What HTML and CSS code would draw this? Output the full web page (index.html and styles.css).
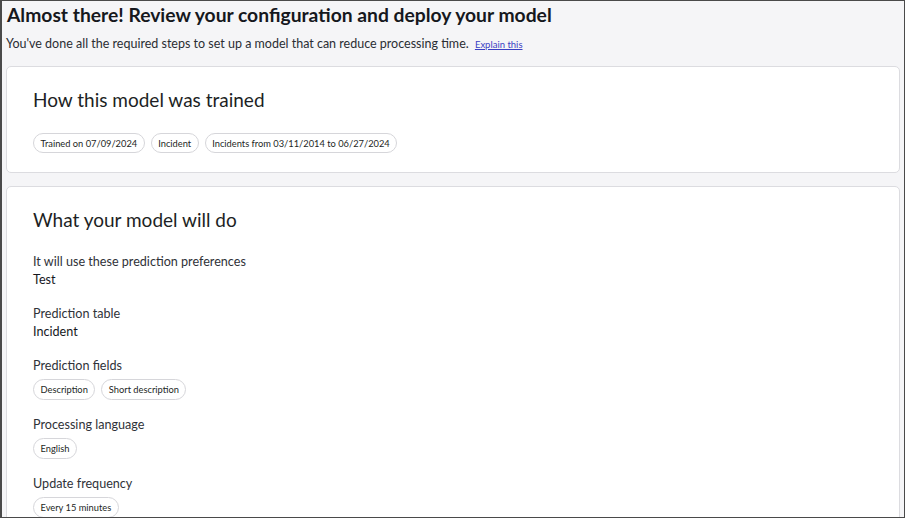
FILE: index.html
```html
<!DOCTYPE html>
<html>
<head>
<meta charset="utf-8">
<link rel="stylesheet" href="styles.css">
</head>
<body>
<div class="frame">
  <h1 class="title">Almost there! Review your configuration and deploy your model</h1>
  <p class="subtitle">You've done all the required steps to set up a model that can reduce processing time. <a class="link" href="#">Explain this</a></p>
  <section class="card card-trained">
    <h2 class="card-title">How this model was trained</h2>
    <div class="pills">
      <span class="pill">Trained on 07/09/2024</span>
      <span class="pill">Incident</span>
      <span class="pill">Incidents from 03/11/2014 to 06/27/2024</span>
    </div>
  </section>
  <section class="card card-do">
    <h2 class="card-title">What your model will do</h2>
    <div class="field">
      <div class="label">It will use these prediction preferences</div>
      <div class="value">Test</div>
    </div>
    <div class="field">
      <div class="label">Prediction table</div>
      <div class="value">Incident</div>
    </div>
    <div class="field">
      <div class="label">Prediction fields</div>
      <div class="pills small">
        <span class="pill">Description</span>
        <span class="pill">Short description</span>
      </div>
    </div>
    <div class="field">
      <div class="label">Processing language</div>
      <div class="pills small">
        <span class="pill">English</span>
      </div>
    </div>
    <div class="field">
      <div class="label">Update frequency</div>
      <div class="pills small">
        <span class="pill">Every 15 minutes</span>
      </div>
    </div>
  </section>
</div>
</body>
</html>
```
FILE: styles.css
```css
html, body {
  margin: 0;
  padding: 0;
  background: #ffffff;
  overflow: hidden;
}
body {
  font-family: Lato, "Open Sans", sans-serif;
  color: #1d1f24;
}
.frame {
  box-sizing: border-box;
  width: 905px;
  height: 518px;
  border: 1px solid #4a4a4a;
  border-left-width: 2px;
  background: #f5f5f7;
  padding: 0 4px 0 4px;
  overflow: hidden;
}
.title {
  margin: 0;
  padding: 2px 0 0 1px;
  font-size: 19.3px;
  font-weight: 700;
  line-height: 24px;
  color: #16181d;
}
.subtitle {
  margin: 8px 0 0 0;
  font-size: 12.5px;
  line-height: 18px;
  color: #2a2d33;
}
.link {
  font-size: 9.5px;
  color: #3a3fc4;
  text-decoration: underline;
  margin-left: 3px;
}
.card {
  background: #ffffff;
  border: 1px solid #dcdce0;
  border-radius: 5px;
  padding: 21px 26px 19px 26px;
}
.card-trained {
  margin-top: 12px;
}
.card-do {
  margin-top: 13px;
}
.card-title {
  margin: 0;
  font-size: 19px;
  font-weight: 400;
  line-height: 24px;
  color: #1d1f24;
}
.card-trained .pills {
  margin-top: 21px;
}
.pills {
  display: flex;
  gap: 6px;
}
.pill {
  display: inline-flex;
  align-items: center;
  height: 20px;
  box-sizing: border-box;
  padding: 0 6.5px;
  border: 1px solid #d6d6da;
  border-radius: 10px;
  font-size: 9.3px;
  color: #1d1f24;
  background: #fff;
}
.pills.small .pill {
  height: 21px;
  border-radius: 11px;
}
.card-do .card-title {
  margin-bottom: 21px;
}
.field {
  margin-bottom: 16px;
}
.label {
  font-size: 12.6px;
  line-height: 18px;
  color: #2f3238;
}
.value {
  font-size: 12.6px;
  line-height: 18px;
  color: #16181d;
}
.pills.small {
  margin-top: 4px;
}
```
